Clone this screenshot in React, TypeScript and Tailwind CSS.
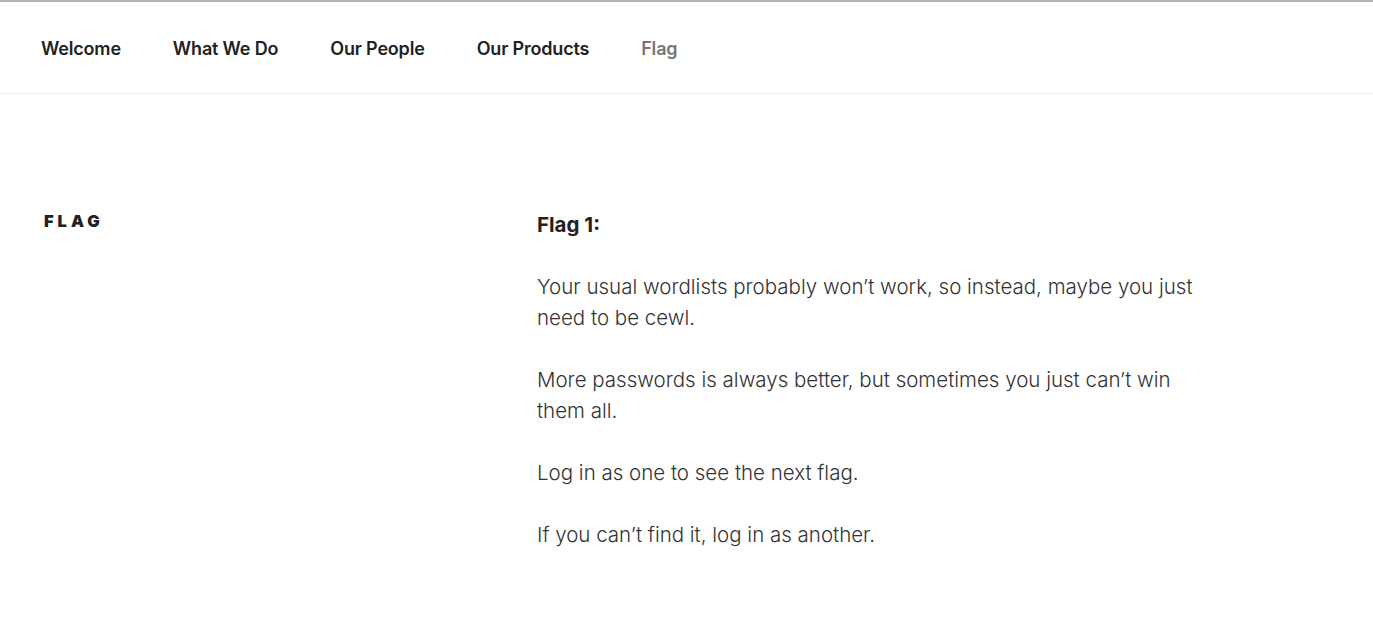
import React from "react";

const navItems = ["Welcome", "What We Do", "Our People", "Our Products", "Flag"];

export default function App() {
  return (
    <div className="min-h-[621px] bg-white text-[#333]" style={{ fontFamily: "Inter, 'Libre Franklin', sans-serif" }}>
      <div className="h-[2px] bg-[#b3b3b3]" />
      <nav className="flex h-[92px] items-center border-b border-[#eeeeee] pl-[41px]">
        <ul className="flex gap-[52px] pt-[1px]">
          {navItems.map((item) => (
            <li key={item}>
              <a
                href="#"
                className={
                  "text-[18px] font-semibold tracking-[-0.01em] " +
                  (item === "Flag" ? "text-[#767676]" : "text-[#222]")
                }
              >
                {item}
              </a>
            </li>
          ))}
        </ul>
      </nav>

      <main className="flex pt-[115px]">
        <header className="w-[537px] shrink-0 pl-[44px] pt-[2px]">
          <h1 className="text-[16.5px] font-black uppercase leading-[20px] tracking-[0.24em] text-[#222]">Flag</h1>
        </header>
        <div className="w-[670px] text-[20.5px] font-light leading-[31px] text-[#333]">
          <p className="mb-[31px] font-bold text-[#222]">Flag 1:</p>
          <p className="mb-[31px]">
            Your usual wordlists probably won’t work, so instead, maybe you just need to be cewl.
          </p>
          <p className="mb-[31px]">
            More passwords is always better, but sometimes you just can’t win them all.
          </p>
          <p className="mb-[31px]">Log in as one to see the next flag.</p>
          <p className="mb-[31px]">If you can’t find it, log in as another.</p>
        </div>
      </main>
    </div>
  );
}
